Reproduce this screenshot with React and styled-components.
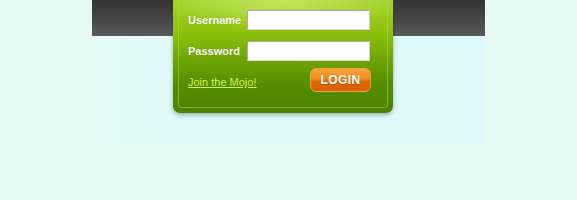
import React from 'react';
import styled, { createGlobalStyle } from 'styled-components';

const GlobalStyle = createGlobalStyle`
  body {
    margin: 0;
    background: #e6faf3;
    font-family: 'Liberation Sans', Arial, sans-serif;
  }
`;

const Page = styled.div`
  width: 577px;
  height: 200px;
  overflow: hidden;
`;

const Band = styled.div`
  width: 393px;
  height: 143px;
  margin-left: 92px;
  background:
    linear-gradient(180deg, #333333 0px, #4a4a4a 22px, #5a5a5a 36px, transparent 36px),
    linear-gradient(90deg, #e4fbf6 0%, #dff8fb 30%, #dff8fc 100%);
  padding-left: 81px;
  box-sizing: border-box;
`;

const Panel = styled.div`
  width: 220px;
  height: 113px;
  box-sizing: border-box;
  border-radius: 0 0 7px 7px;
  background:
    radial-gradient(ellipse 120px 30px at 50% 0%, rgba(200, 235, 110, 0.8), rgba(200, 235, 110, 0) 100%),
    linear-gradient(180deg, #a6d22a 0px, #8fc30c 30px, #6ea504 60px, #548d00 85px, #4a8200 113px);
  box-shadow: 0 2px 4px rgba(0, 60, 40, 0.35);
  padding: 0 5px 5px;
`;

const Inner = styled.div`
  height: 100%;
  box-sizing: border-box;
  border: 1px solid rgba(170, 220, 70, 0.55);
  border-top: none;
  border-radius: 0 0 4px 4px;
  padding: 10px 17px 0 9px;
  display: flex;
  flex-direction: column;
  gap: 11px;
`;

const Row = styled.div`
  display: flex;
  align-items: center;
  justify-content: space-between;
`;

const Label = styled.label`
  color: #ffffff;
  font-size: 11px;
  font-weight: bold;
  text-shadow: 0 0 1px rgba(60, 100, 0, 0.4);
`;

const Input = styled.input`
  width: 123px;
  height: 20px;
  box-sizing: border-box;
  border: 1px solid #a9a9a9;
  border-right-color: #cfcfcf;
  border-bottom-color: #dcdcdc;
  background: #ffffff;
  padding: 0 3px;
  margin: 0;
`;

const ActionRow = styled(Row)`
  margin-top: -4px;
`;

const JoinLink = styled.a`
  color: #d0f050;
  font-size: 11px;
  text-decoration: underline;
  margin-top: 4px;
`;

const LoginButton = styled.button`
  width: 61px;
  height: 24px;
  border: 1px solid #f0a040;
  border-radius: 6px;
  background: linear-gradient(180deg, #f9a23a 0%, #f08a1a 45%, #e06a00 55%, #d85e00 100%);
  color: #ffffff;
  font-family: 'Liberation Sans', Arial, sans-serif;
  font-weight: bold;
  font-size: 12px;
  letter-spacing: 0.4px;
  text-shadow: 0 1px 1px rgba(120, 50, 0, 0.5);
  padding: 0;
  margin-right: -1px;
`;

export default function App() {
  return (
    <Page>
      <GlobalStyle />
      <Band>
        <Panel>
          <Inner>
            <Row>
              <Label>Username</Label>
              <Input type="text" />
            </Row>
            <Row>
              <Label>Password</Label>
              <Input type="password" />
            </Row>
            <ActionRow>
              <JoinLink href="#">Join the Mojo!</JoinLink>
              <LoginButton>LOGIN</LoginButton>
            </ActionRow>
          </Inner>
        </Panel>
      </Band>
    </Page>
  );
}
